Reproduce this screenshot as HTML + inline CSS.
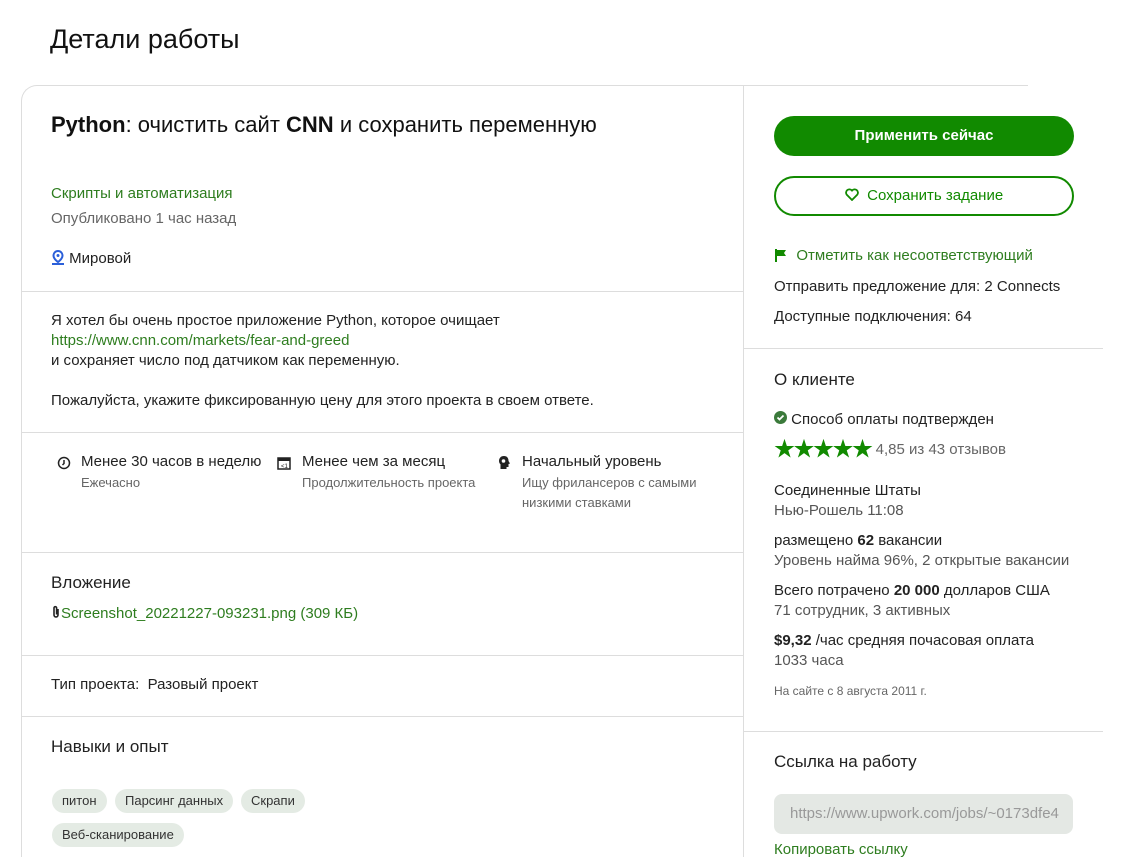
<!DOCTYPE html>
<html><head><meta charset="utf-8"><style>
*{margin:0;padding:0;box-sizing:border-box}
html,body{width:1125px;height:857px;overflow:hidden}
body{background:#fff;font-family:"Liberation Sans","Noto Sans CJK SC",sans-serif;color:#222;position:relative;font-size:15px}
.a{position:absolute;white-space:nowrap;line-height:20px}
.g{color:#2e7d1f}
.s{color:#666;font-size:13px}
.hl{position:absolute;height:1px;background:#ddd}
.vl{position:absolute;width:1px;background:#ddd}
.tag{position:absolute;background:#e4ebe4;border-radius:12px;height:24px;line-height:24px;font-size:13px;padding:0 10px;color:#333}
</style></head><body>
<div class="a" style="left:50px;top:24px;font-size:27px;line-height:30px;color:#111">Детали работы</div>
<div style="position:absolute;left:21px;top:85px;width:1100px;height:772px;border-left:1px solid #ddd;border-top:1px solid #ddd;border-top-left-radius:16px"></div>
<div style="position:absolute;left:1028px;top:84px;width:100px;height:3px;background:#fff"></div>
<div class="vl" style="left:743px;top:86px;height:771px"></div>
<div class="hl" style="left:21px;top:291px;width:722px"></div>
<div class="hl" style="left:21px;top:432px;width:722px"></div>
<div class="hl" style="left:21px;top:552px;width:722px"></div>
<div class="hl" style="left:21px;top:655px;width:722px"></div>
<div class="hl" style="left:21px;top:716px;width:722px"></div>
<div class="hl" style="left:743px;top:348px;width:360px"></div>
<div class="hl" style="left:743px;top:731px;width:360px"></div>

<div class="a" style="left:51px;top:111px;font-size:22px;line-height:28px;color:#111"><b style="font-weight:600">Python</b>: очистить сайт <b style="font-weight:600">CNN</b> и сохранить переменную</div>
<div class="a g" style="left:51px;top:184px">Скрипты и автоматизация</div>
<div class="a" style="left:51px;top:209px;color:#666">Опубликовано 1 час назад</div>
<div class="a" style="left:51px;top:249px"><svg width="14" height="16" viewBox="0 0 14 16" style="vertical-align:-3px"><path d="M7 1a4.5 4.5 0 0 0-4.5 4.5C2.5 9 7 12 7 12s4.5-3 4.5-6.5A4.5 4.5 0 0 0 7 1z" fill="none" stroke="#2b5fd9" stroke-width="2"/><circle cx="7" cy="5.5" r="1.5" fill="#2b5fd9"/><path d="M1 14h12" stroke="#2b5fd9" stroke-width="2"/></svg> Мировой</div>

<div class="a" style="left:51px;top:311px">Я хотел бы очень простое приложение Python, которое очищает</div>
<div class="a g" style="left:51px;top:331px">https://www.cnn.com/markets/fear-and-greed</div>
<div class="a" style="left:51px;top:351px">и сохраняет число под датчиком как переменную.</div>
<div class="a" style="left:51px;top:391px">Пожалуйста, укажите фиксированную цену для этого проекта в своем ответе.</div>

<svg style="position:absolute;left:57px;top:456px" width="14" height="14" viewBox="0 0 14 14"><circle cx="7" cy="7" r="5.5" fill="none" stroke="#222" stroke-width="1.5"/><path d="M7 4v3.5L5.5 9" stroke="#222" stroke-width="1.5" fill="none"/></svg>
<div class="a" style="left:81px;top:452px">Менее 30 часов в неделю</div>
<div class="a s" style="left:81px;top:473px">Ежечасно</div>
<svg style="position:absolute;left:277px;top:456px" width="14" height="14" viewBox="0 0 14 14"><rect x="1" y="2" width="12" height="11" fill="none" stroke="#222" stroke-width="1.5"/><rect x="1" y="2" width="12" height="3" fill="#222"/><text x="4" y="12" font-size="6" fill="#222">&lt;1</text></svg>
<div class="a" style="left:302px;top:452px">Менее чем за месяц</div>
<div class="a s" style="left:302px;top:473px">Продолжительность проекта</div>
<svg style="position:absolute;left:497px;top:455px" width="14" height="15" viewBox="0 0 14 15"><path d="M7 1C3.5 1 2 3.5 2 6c0 1.5.7 2.6 1.5 3.3V14h6v-2h2V9l1.5-.5L11.5 6C11.5 3 10 1 7 1z" fill="#222"/><circle cx="6.5" cy="6" r="1.8" fill="#fff"/></svg>
<div class="a" style="left:522px;top:452px">Начальный уровень</div>
<div class="a s" style="left:522px;top:473px">Ищу фрилансеров с самыми</div>
<div class="a s" style="left:522px;top:493px">низкими ставками</div>

<div class="a" style="left:51px;top:573px;font-size:17px">Вложение</div>
<div class="a g" style="left:51px;top:604px"><svg width="10" height="14" viewBox="0 0 10 14" style="vertical-align:-1px"><path d="M7 4v6a2 2 0 0 1-4 0V3a1.3 1.3 0 0 1 2.6 0v6.5" fill="none" stroke="#222" stroke-width="1.6"/></svg>Screenshot_20221227-093231.png (309 КБ)</div>

<div class="a" style="left:51px;top:675px">Тип проекта:&nbsp; Разовый проект</div>
<div class="a" style="left:51px;top:737px;font-size:17px">Навыки и опыт</div>
<div class="tag" style="left:52px;top:789px">питон</div>
<div class="tag" style="left:115px;top:789px">Парсинг данных</div>
<div class="tag" style="left:241px;top:789px">Скрапи</div>
<div class="tag" style="left:52px;top:823px">Веб-сканирование</div>

<div style="position:absolute;left:774px;top:116px;width:300px;height:40px;border-radius:20px;background:#118a00;color:#fff;text-align:center;line-height:40px;font-size:15px;font-weight:bold">Применить сейчас</div>
<div style="position:absolute;left:774px;top:176px;width:300px;height:40px;border-radius:20px;border:2px solid #118a00;color:#118a00;text-align:center;line-height:36px;font-size:15px"><svg width="14" height="13" viewBox="0 0 14 13" style="vertical-align:-1px"><path d="M7 12L1.8 6.8A3 3 0 0 1 7 2.6a3 3 0 0 1 5.2 4.2z" fill="none" stroke="#118a00" stroke-width="1.8"/></svg>&nbsp; Сохранить задание</div>
<div class="a" style="left:774px;top:246px"><svg width="14" height="14" viewBox="0 0 14 14" style="vertical-align:-2px"><path d="M2 1v13" stroke="#118a00" stroke-width="2"/><path d="M3 2h9l-2 3 2 3H3z" fill="#118a00"/></svg>&nbsp;&nbsp;<span class="g">Отметить как несоответствующий</span></div>
<div class="a" style="left:774px;top:277px">Отправить предложение для: 2 Connects</div>
<div class="a" style="left:774px;top:307px">Доступные подключения: 64</div>

<div class="a" style="left:774px;top:370px;font-size:17px">О клиенте</div>
<div class="a" style="left:774px;top:410px"><svg width="13" height="13" viewBox="0 0 13 13" style="vertical-align:0"><circle cx="6.5" cy="6.5" r="6.5" fill="#3b7a3b"/><path d="M3.5 6.5l2 2 4-4" stroke="#fff" stroke-width="1.8" fill="none"/></svg> Способ оплаты подтвержден</div>
<div class="a" style="left:774px;top:440px;color:#666"><span style="color:#118a00;font-size:21px;letter-spacing:-1.5px;vertical-align:-2px">★★★★★</span> 4,85 из 43 отзывов</div>
<div class="a" style="left:774px;top:481px">Соединенные Штаты</div>
<div class="a" style="left:774px;top:501px;color:#555">Нью-Рошель 11:08</div>
<div class="a" style="left:774px;top:531px">размещено <b>62</b> вакансии</div>
<div class="a" style="left:774px;top:551px;color:#555">Уровень найма 96%, 2 открытые вакансии</div>
<div class="a" style="left:774px;top:581px">Всего потрачено <b>20 000</b> долларов США</div>
<div class="a" style="left:774px;top:601px;color:#555">71 сотрудник, 3 активных</div>
<div class="a" style="left:774px;top:631px"><b>$9,32</b> /час средняя почасовая оплата</div>
<div class="a" style="left:774px;top:651px;color:#555">1033 часа</div>
<div class="a s" style="left:774px;top:681px;font-size:12px">На сайте с 8 августа 2011 г.</div>

<div class="a" style="left:774px;top:752px;font-size:17px">Ссылка на работу</div>
<div style="position:absolute;left:774px;top:794px;width:299px;height:40px;border-radius:8px;background:#e4e8e4;color:#999;line-height:40px;padding-left:16px;font-size:15px;overflow:hidden;white-space:nowrap">https://www.upwork.com/jobs/~0173dfe4</div>
<div class="a g" style="left:774px;top:840px">Копировать ссылку</div>
</body></html>
